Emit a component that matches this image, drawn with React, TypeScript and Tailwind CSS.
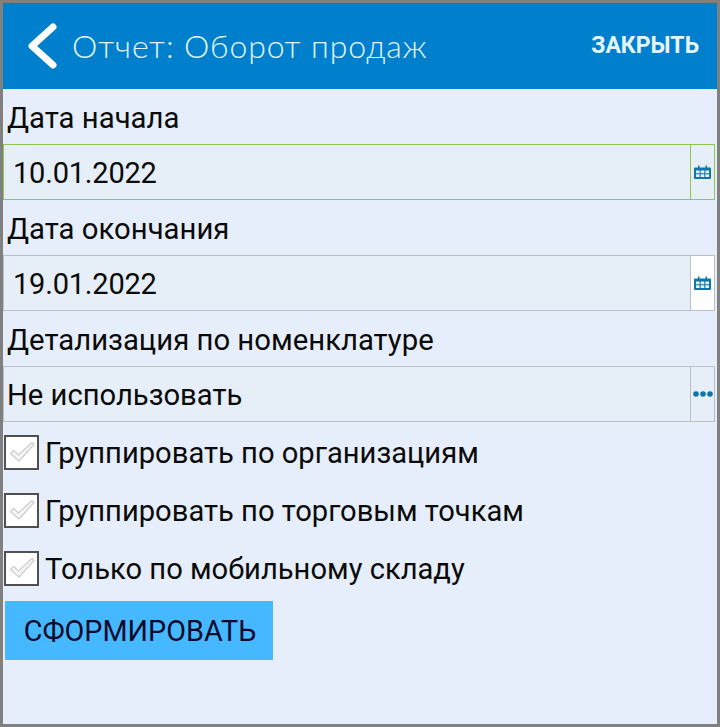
const CalendarIcon = () => (
  <svg width="17" height="14" viewBox="0 0 17 14" className="text-[#0f76a8]">
    <path d="M1 2.5h3V0.5h1.5v2h6v-2H13v2h3a1 1 0 0 1 1 1V13a1 1 0 0 1-1 1H1a1 1 0 0 1-1-1V3.5a1 1 0 0 1 1-1z" fill="currentColor" />
    <path d="M2 5.5h3.6v2.7H2zM6.7 5.5h3.6v2.7H6.7zM11.4 5.5H15v2.7h-3.6zM2 9.3h3.6V12H2zM6.7 9.3h3.6V12H6.7zM11.4 9.3H15V12h-3.6z" fill="#e8f0f8" />
  </svg>
);

const DotsIcon = () => (
  <svg width="20" height="6" viewBox="0 0 20 6" className="text-[#0f76a8]">
    <circle cx="3" cy="3" r="2.8" fill="currentColor" />
    <circle cx="10" cy="3" r="2.8" fill="currentColor" />
    <circle cx="17" cy="3" r="2.8" fill="currentColor" />
  </svg>
);

const CheckIcon = () => (
  <svg width="28" height="24" viewBox="0 0 28 24" fill="none">
    <path
      d="M2.5 13.5l3-3 5 4.5L24 2.5l2 2L11 21z"
      fill="#f6f6f6"
      stroke="#d0d0d0"
      strokeWidth="1.4"
      strokeLinejoin="round"
    />
  </svg>
);

function Field({
  label,
  value,
  icon,
  active,
  whiteButton,
  inset,
}: {
  label: string;
  value: string;
  icon: React.ReactNode;
  active?: boolean;
  whiteButton?: boolean;
  inset?: boolean;
}) {
  const border = active ? "border-[#8cc850]" : "border-[#bcc0c4]";
  return (
    <div>
      <div className="h-[55px] pl-[4px] pt-[12px] text-[29.3px] leading-[34px] text-[#0a0a0a]">{label}</div>
      <div className={`flex h-[56px] mr-[2px] border ${border} bg-[#e6eef7]`}>
        <div
          className={`flex-1 flex items-center pt-[3px] text-[#0a0a0a] ${
            inset ? "pl-[9px] text-[29px] tracking-[-0.2px]" : "pl-[3px] text-[29.2px]"
          }`}
        >
          {value}
        </div>
        <div
          className={`w-[24px] flex items-center justify-center border-l ${border} ${whiteButton ? "bg-white" : ""}`}
        >
          {icon}
        </div>
      </div>
    </div>
  );
}

function CheckRow({ label }: { label: string }) {
  return (
    <div className="flex items-center h-[58px] pl-[1px]">
      <div className="w-[35px] h-[35px] border-[2px] border-[#505050] bg-white flex items-center justify-center">
        <CheckIcon />
      </div>
      <span className="ml-[6px] pt-[3px] text-[29.15px] text-[#0a0a0a]">{label}</span>
    </div>
  );
}

export default function App() {
  return (
    <div className="w-[720px] h-[727px] border-[3px] border-[#808080] bg-[#e6eefb] font-['Roboto',sans-serif] overflow-hidden">
      {/* Header */}
      <div className="h-[86px] bg-[#0080cc] flex items-center justify-between pl-[23px] pr-[18px]">
        <div className="flex items-center">
          <svg width="32" height="46" viewBox="0 0 32 46" fill="none">
            <path d="M27 4L6 23l21 19" stroke="white" strokeWidth="7" strokeLinecap="round" strokeLinejoin="round" />
          </svg>
          <span className="ml-[14px] font-['Lato',sans-serif] font-light text-[32px] tracking-[0.9px] text-[#e4f6fb]">
            Отчет: Оборот продаж
          </span>
        </div>
        <span className="text-[23px] font-bold text-[#e4f6fb]">ЗАКРЫТЬ</span>
      </div>

      <Field label="Дата начала" value="10.01.2022" icon={<CalendarIcon />} active inset />
      <Field label="Дата окончания" value="19.01.2022" icon={<CalendarIcon />} whiteButton inset />
      <Field label="Детализация по номенклатуре" value="Не использовать" icon={<DotsIcon />} />

      <div className="pt-[1px]">
        <CheckRow label="Группировать по организациям" />
        <CheckRow label="Группировать по торговым точкам" />
        <CheckRow label="Только по мобильному складу" />
      </div>

      <button
        type="button"
        className="block ml-[2px] mt-[4px] w-[268px] h-[59px] pt-[2px] pl-[2px] bg-[#45b8ff] text-[28.75px] text-[#0a0a2a]"
      >
        СФОРМИРОВАТЬ
      </button>
    </div>
  );
}
